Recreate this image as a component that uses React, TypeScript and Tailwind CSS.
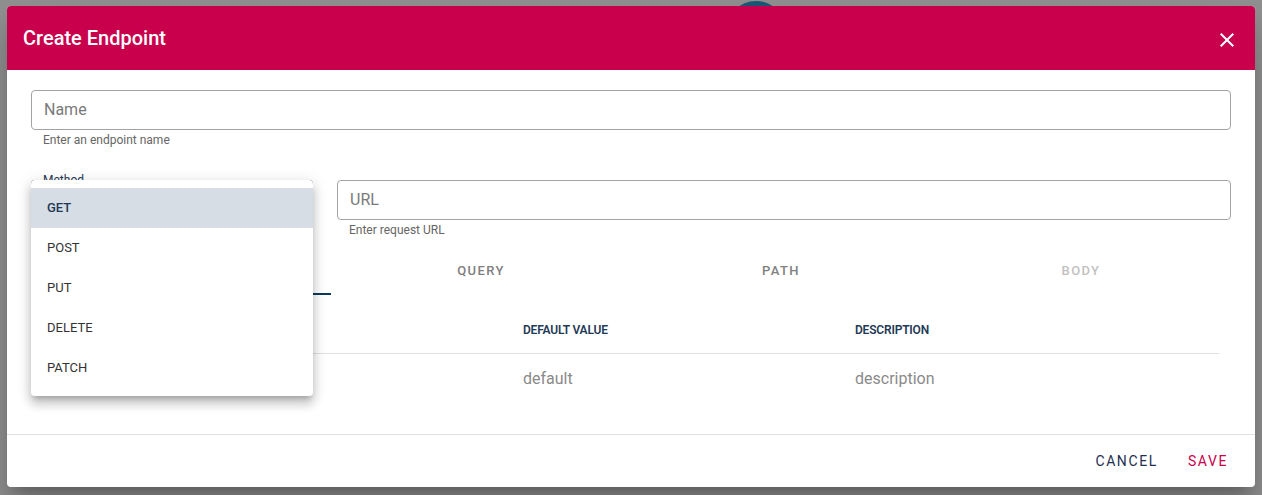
const methods = ["GET", "POST", "PUT", "DELETE", "PATCH"];
const tabs = [
  { label: "", disabled: false },
  { label: "QUERY", disabled: false },
  { label: "PATH", disabled: false },
  { label: "BODY", disabled: true },
];

const CloseIcon = () => (
  <svg viewBox="0 0 24 24" className="w-6 h-6 fill-white">
    <path d="M19 6.41L17.59 5 12 10.59 6.41 5 5 6.41 10.59 12 5 17.59 6.41 19 12 13.41 17.59 19 19 17.59 13.41 12z" />
  </svg>
);

const App = () => {
  return (
    <div className="relative w-[1262px] h-[495px] overflow-hidden bg-[#909090] font-['Roboto',sans-serif]">
      {/* something behind the overlay */}
      <div className="absolute left-[726px] top-[1px] w-[60px] h-[60px] rounded-full bg-[#1a5878]" />

      <div className="absolute left-[7px] top-[6px] w-[1248px] h-[481px] rounded-[4px] bg-white shadow-[0_11px_15px_-7px_rgba(0,0,0,0.25),0_24px_38px_3px_rgba(0,0,0,0.18)] overflow-hidden flex flex-col">
        {/* header */}
        <div className="h-[64px] shrink-0 bg-[#c9004b] flex items-center justify-between pl-4 pr-4">
          <span className="text-[20px] font-medium text-white">Create Endpoint</span>
          <span className="mt-[3px]">
            <CloseIcon />
          </span>
        </div>

        {/* body */}
        <div className="relative flex-1 px-6 pt-5">
          <div className="h-[40px] rounded-[4px] border border-[#a3a3a3] flex items-center px-3">
            <span className="text-[16px] text-[#7a7a7a]">Name</span>
          </div>
          <div className="mt-[3px] px-3 text-[12px] leading-[14px] text-[#666]">Enter an endpoint name</div>

          <div className="mt-[33px] flex gap-6">
            <div className="relative w-[282px] shrink-0">
              <div className="h-[40px] rounded-[4px] border-2 border-[#1f3a56]" />
              <span className="absolute left-[8px] -top-[7px] bg-white px-1 text-[12px] leading-[14px] text-[#1f3a56]">Method</span>
            </div>
            <div className="flex-1">
              <div className="h-[40px] rounded-[4px] border border-[#a3a3a3] flex items-center px-3">
                <span className="text-[16px] text-[#7a7a7a]">URL</span>
              </div>
              <div className="mt-[3px] px-3 text-[12px] leading-[14px] text-[#666]">Enter request URL</div>
            </div>
          </div>

          {/* tabs */}
          <div className="mt-[10px] grid grid-cols-4 h-[48px]">
            {tabs.map((t, i) => (
              <div key={i} className="relative flex items-center justify-center">
                <span
                  className={`text-[13px] font-medium tracking-[1.4px] ${t.disabled ? "text-[#c2c2c2]" : "text-[#808080]"}`}
                >
                  {t.label}
                </span>
                {i === 0 && <div className="absolute left-0 right-0 bottom-0 h-[2px] bg-[#0d3a5c]" />}
              </div>
            ))}
          </div>

          {/* table */}
          <div className="mt-[11px] mr-3">
            <div className="grid grid-cols-[492px_332px_1fr] h-[48px] items-center border-b border-[#e0e0e0]">
              <span />
              <span className="text-[12px] font-semibold tracking-[-0.2px] text-[#1f3a56]">DEFAULT VALUE</span>
              <span className="text-[12px] font-semibold tracking-[-0.2px] text-[#1f3a56]">DESCRIPTION</span>
            </div>
            <div className="grid grid-cols-[492px_332px_1fr] h-[50px] items-center">
              <span />
              <span className="text-[16px] text-[#8a8a8a]">default</span>
              <span className="text-[16px] text-[#8a8a8a]">description</span>
            </div>
          </div>

          {/* open select menu */}
          <div className="absolute left-[24px] top-[110px] w-[282px] rounded-[4px] bg-white py-2 shadow-[0_5px_5px_-3px_rgba(0,0,0,0.2),0_8px_10px_1px_rgba(0,0,0,0.14),0_3px_14px_2px_rgba(0,0,0,0.12)]">
            {methods.map((m, i) => (
              <div
                key={m}
                className={`h-[40px] flex items-center px-4 text-[13px] ${i === 0 ? "bg-[#d6dde4] text-[#1f3a56] font-medium" : "text-[#333]"}`}
              >
                {m}
              </div>
            ))}
          </div>
        </div>

        {/* footer */}
        <div className="h-[53px] shrink-0 border-t border-[#e0e0e0] flex items-center justify-end gap-[14px] pr-[19px]">
          <button className="px-2 py-1.5 text-[14px] tracking-[1.6px] text-[#1f3050]">CANCEL</button>
          <button className="px-2 py-1.5 text-[14px] tracking-[1.6px] text-[#c9004b]">SAVE</button>
        </div>
      </div>
    </div>
  );
};

export default App;
